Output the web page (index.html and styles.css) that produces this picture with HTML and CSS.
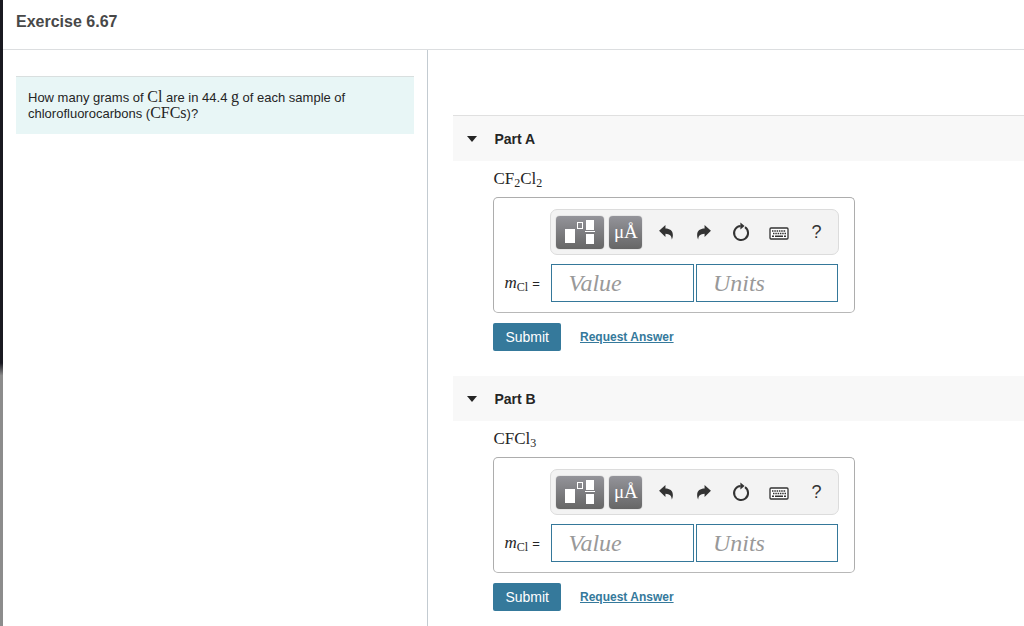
FILE: index.html
```html
<!DOCTYPE html>
<html lang="en">
<head>
    <meta charset="UTF-8">
    <meta name="viewport" content="width=device-width, initial-scale=1.0">
    <title>Exercise 6.67</title>
    <link rel="stylesheet" href="styles.css">
</head>
<body>
    <!-- Shared toolbar icons -->
    <svg class="sprite" aria-hidden="true">
        <symbol id="icon-template" viewBox="0 0 32 26">
            <rect x="1" y="10" width="10" height="14" fill="#fff"/>
            <rect x="13.5" y="3.5" width="5" height="6" fill="none" stroke="#fff"/>
            <rect x="22" y="1" width="8" height="10" fill="#fff"/>
            <rect x="21" y="12" width="10" height="1" fill="#fff"/>
            <rect x="22" y="15" width="8" height="10" fill="#fff"/>
        </symbol>
        <symbol id="icon-undo" viewBox="0 0 16 16">
            <path d="M1 6.4 7 1v3.3c4 0 7 2 7 6 0 1.8-.4 3-1 4.2-.2-3.3-2-5.2-6-5.3v3z" fill="#333"/>
        </symbol>
        <symbol id="icon-redo" viewBox="0 0 16 16">
            <path d="M15 6.4 9 1v3.3c-4 0-7 2-7 6 0 1.8.4 3 1 4.2.2-3.3 2-5.2 6-5.3v3z" fill="#333"/>
        </symbol>
        <symbol id="icon-reset" viewBox="0 0 18 20">
            <path d="M13 5.2A7 7 0 1 1 8.6 4" fill="none" stroke="#333" stroke-width="2"/>
            <path d="M8.4 .6 12.6 4 8.4 7.4z" fill="#333"/>
        </symbol>
        <symbol id="icon-keyboard" viewBox="0 0 20 14">
            <rect x="1" y="1" width="18" height="11" rx="1" fill="#fff" stroke="#333" stroke-width="1.3"/>
            <path d="M3 4h14M4 6.5h13" stroke="#333" stroke-width="1.4" stroke-dasharray="1.5 .8"/>
            <path d="M3 9.3h2M6 9.3h8M15 9.3h2" stroke="#333" stroke-width="1.4"/>
        </symbol>
    </svg>

    <div class="page">
        <header class="page-header">
            <h1>Exercise 6.67</h1>
        </header>
        <main class="columns">
            <section class="left">
                <p class="question">How many grams of <span class="math">Cl</span> are in 44.4 <span class="math">g</span> of each sample of chlorofluorocarbons (<span class="math">CFCs</span>)?</p>
            </section>

            <section class="right">
                <!-- Part A -->
                <article class="part">
                    <h2 class="part-title"><button type="button" aria-expanded="true"><span class="arrow"></span>Part A</button></h2>
                    <form class="part-body">
                        <p class="formula">CF<sub>2</sub>Cl<sub>2</sub></p>
                        <div class="answer">
                            <div class="toolbar">
                                <button type="button" class="tool template" aria-label="Templates"><svg><use href="#icon-template"/></svg></button>
                                <button type="button" class="tool symbols">μÅ</button>
                                <button type="button" class="icon" aria-label="Undo"><svg width="17" height="17"><use href="#icon-undo"/></svg></button>
                                <button type="button" class="icon" aria-label="Redo"><svg width="17" height="17"><use href="#icon-redo"/></svg></button>
                                <button type="button" class="icon" aria-label="Reset"><svg width="18" height="20"><use href="#icon-reset"/></svg></button>
                                <button type="button" class="icon keyboard" aria-label="Keyboard shortcuts"><svg width="20" height="14"><use href="#icon-keyboard"/></svg></button>
                                <button type="button" class="icon">?</button>
                            </div>
                            <label class="variable" for="valueA"><i>m</i><sub>Cl</sub> <span class="equals">=</span></label>
                            <div class="fields">
                                <input type="text" id="valueA" placeholder="Value">
                                <input type="text" id="unitsA" placeholder="Units" aria-label="Units">
                            </div>
                        </div>
                        <div class="actions">
                            <button type="submit" class="submit">Submit</button>
                            <a href="#">Request Answer</a>
                        </div>
                    </form>
                </article>

                <!-- Part B -->
                <article class="part">
                    <h2 class="part-title"><button type="button" aria-expanded="true"><span class="arrow"></span>Part B</button></h2>
                    <form class="part-body">
                        <p class="formula">CFCl<sub>3</sub></p>
                        <div class="answer">
                            <div class="toolbar">
                                <button type="button" class="tool template" aria-label="Templates"><svg><use href="#icon-template"/></svg></button>
                                <button type="button" class="tool symbols">μÅ</button>
                                <button type="button" class="icon" aria-label="Undo"><svg width="17" height="17"><use href="#icon-undo"/></svg></button>
                                <button type="button" class="icon" aria-label="Redo"><svg width="17" height="17"><use href="#icon-redo"/></svg></button>
                                <button type="button" class="icon" aria-label="Reset"><svg width="18" height="20"><use href="#icon-reset"/></svg></button>
                                <button type="button" class="icon keyboard" aria-label="Keyboard shortcuts"><svg width="20" height="14"><use href="#icon-keyboard"/></svg></button>
                                <button type="button" class="icon">?</button>
                            </div>
                            <label class="variable" for="valueB"><i>m</i><sub>Cl</sub> <span class="equals">=</span></label>
                            <div class="fields">
                                <input type="text" id="valueB" placeholder="Value">
                                <input type="text" id="unitsB" placeholder="Units" aria-label="Units">
                            </div>
                        </div>
                        <div class="actions">
                            <button type="submit" class="submit">Submit</button>
                            <a href="#">Request Answer</a>
                        </div>
                    </form>
                </article>
            </section>
        </main>
    </div>
</body>
</html>
```
FILE: styles.css
```css
* {
    box-sizing: border-box;
}
body {
    margin: 0;
    padding-left: 3px;
    font-family: "Liberation Sans", Arial, sans-serif;
    font-size: 13px;
    color: #252525;
    background: linear-gradient(#191920 58%, #8c8c8c 60%);
}
h1, h2, p {
    margin: 0;
}
button {
    font-family: inherit;
    border: none;
    padding: 0;
    background: none;
    color: inherit;
    cursor: pointer;
}
.sprite {
    display: none;
}
.page {
    min-height: 100vh;
    display: flex;
    flex-direction: column;
    background: #fff;
}
.page-header {
    padding: 13px 13px 18px;
    border-bottom: 1px solid #dcdee0;
}
.page-header h1 {
    font-size: 16px;
    line-height: 18px;
    color: #484848;
}
.columns {
    flex: 1;
    display: grid;
    grid-template-columns: 5fr 7fr;
}
.left {
    padding: 26px 13px;
    border-right: 1px solid #c3cbd1;
}
.question {
    padding: 13px 12px 12px;
    border-top: 1px solid #d9dfdf;
    background: #e8f6f6;
    line-height: 16px;
}
.math {
    font-family: "Liberation Serif", "Times New Roman", serif;
    font-size: 16px;
    line-height: 0;
}
.right {
    padding: 65px 0 0 25px;
    min-width: 0;
}

/* Parts */
.part {
    margin-bottom: 25px;
}
.part:last-child {
    margin-bottom: 0;
}
.part-title {
    background: #f8f8f8;
    line-height: 0;
}
.part:first-child .part-title {
    border-top: 1px solid #e0e0e0;
}
.part-title button {
    display: flex;
    align-items: center;
    gap: 17px;
    width: 100%;
    height: 45px;
    padding-left: 14px;
    font-size: 14px;
    font-weight: bold;
}
.arrow {
    border: 5px solid transparent;
    border-top: 6px solid #252525;
    border-bottom: none;
}
.part-body {
    padding-left: 40px;
}
.formula, .variable {
    font-family: "Liberation Serif", "Times New Roman", serif;
    font-size: 17px;
}
.formula {
    line-height: 36px;
}
sub {
    font-size: 12px;
    line-height: 0;
    vertical-align: -3px;
}

/* Answer box */
.answer {
    display: grid;
    grid-template-columns: 46px minmax(0, 1fr);
    gap: 9px 0;
    align-items: center;
    max-width: 362px;
    padding: 11px 15px 10px 10px;
    border: 1px solid #adadad;
    border-bottom-color: #b8b8b8;
    border-radius: 5px;
}
.toolbar {
    grid-column: 2;
    display: flex;
    align-items: center;
    height: 46px;
    padding: 0 3px 0 5px;
    border: 1px solid #dcdcdc;
    border-radius: 7px;
    background: #f3f3f3;
}
.tool {
    display: flex;
    align-items: center;
    justify-content: center;
    height: 33px;
    border-radius: 4px;
    background: linear-gradient(#94949a, #666);
    box-shadow: 0 0 1px #777;
    color: #fff;
}
.template {
    width: 48px;
    margin-right: 5px;
}
.template svg {
    width: 32px;
    height: 26px;
}
.symbols {
    width: 33px;
    margin-right: 5px;
    font-family: "Liberation Serif", "Times New Roman", serif;
    font-size: 19px;
}
.icon {
    flex: 1;
    display: flex;
    align-items: center;
    justify-content: center;
    font-size: 18px;
    color: #333;
}
.keyboard {
    padding-top: 4px;
}
.variable {
    white-space: nowrap;
}
.equals {
    font-family: "Liberation Sans", Arial, sans-serif;
    font-size: 13px;
}
.fields {
    display: flex;
    gap: 2px;
    padding: 0 1px;
}
.fields input {
    flex: 1;
    min-width: 0;
    height: 38px;
    padding: 0 16px;
    border: 1px solid #35789a;
    background: #fff;
    font: italic 24px "Liberation Serif", "Times New Roman", serif;
}
.fields input::placeholder {
    color: #999;
}

/* Buttons under the answer */
.actions {
    display: flex;
    align-items: center;
    gap: 19px;
    padding-top: 10px;
}
.submit {
    height: 28px;
    padding: 0 12px;
    border-radius: 2px;
    background: #35799b;
    color: #fff;
    font-size: 14px;
}
.actions a {
    color: #35799b;
    font-size: 12px;
    font-weight: bold;
}
```
